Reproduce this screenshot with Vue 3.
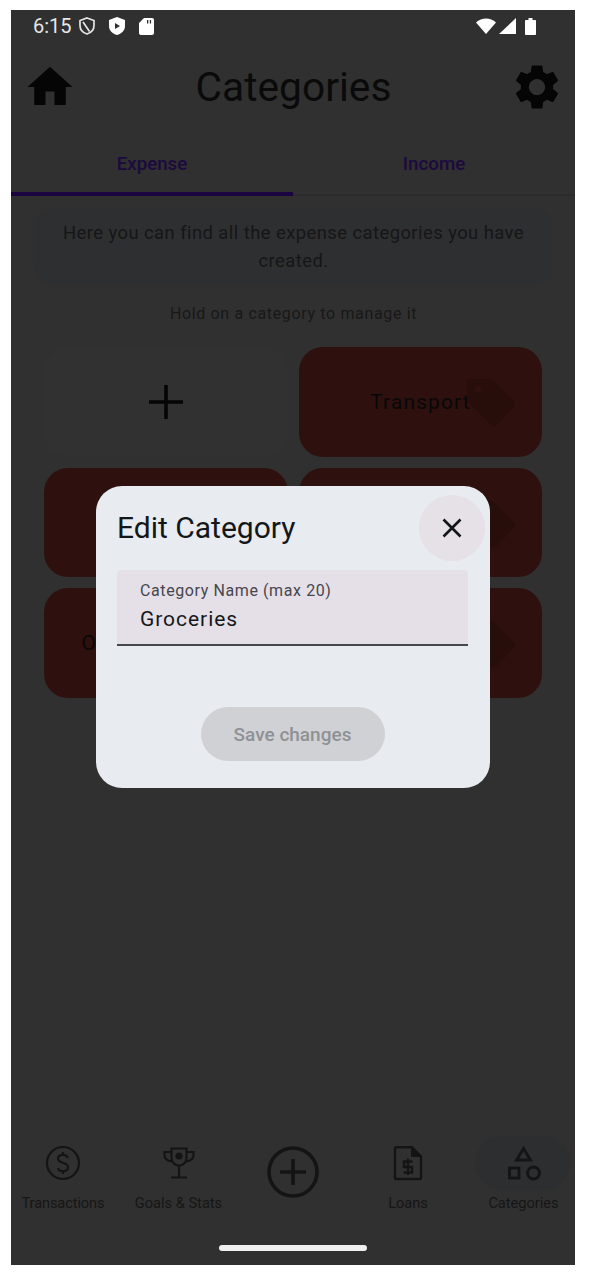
<script setup>
const cards = [
  { id: 1, name: 'Transport' },
  { id: 2, name: '' },
  { id: 3, name: '' },
  { id: 4, name: 'Online Shopping' },
  { id: 5, name: '' }
]
</script>

<template>
  <div class="screen">
    <div class="status">
      <span class="time">6:15</span>
      <svg class="st-shield" viewBox="0 0 16 18" width="16" height="18">
        <path d="M8 1 L15 3.5 V8.5 C15 12.5 12 15.8 8 17 C4 15.8 1 12.5 1 8.5 V3.5 Z M4 5 L10.5 14.5" fill="none" stroke="#e6e6e6" stroke-width="1.7" />
      </svg>
      <svg class="st-play" viewBox="0 0 16 18" width="16" height="18">
        <path fill-rule="evenodd" d="M8 0 L16 3 V9 C16 13.5 12.5 16.8 8 18 C3.5 16.8 0 13.5 0 9 V3 Z M6 6 V12 L11 9 Z" fill="#fff" />
      </svg>
      <svg class="st-sd" viewBox="0 0 15 17" width="15" height="17">
        <path fill-rule="evenodd" d="M5 0 H13 C14.2 0 15 .8 15 2 V15 C15 16.2 14.2 17 13 17 H2 C.8 17 0 16.2 0 15 V5 Z M8 2 V5.5 H9.3 V2 Z M10.8 2 V5.5 H12.1 V2 Z" fill="#fff" />
      </svg>
      <span class="st-space"></span>
      <svg viewBox="0 0 20 16" width="20" height="16">
        <path d="M0 4.5 C5.5 -.8 14.5 -.8 20 4.5 L10 16 Z" fill="#fff" />
      </svg>
      <svg class="st-signal" viewBox="0 0 17 16" width="17" height="16">
        <path d="M17 0 V16 H0 Z" fill="#fff" />
      </svg>
      <svg class="st-batt" viewBox="0 0 11 17" width="11" height="17">
        <path d="M3.5 0 H7.5 V2 H10 C10.6 2 11 2.4 11 3 V16 C11 16.6 10.6 17 10 17 H1 C.4 17 0 16.6 0 16 V3 C0 2.4 .4 2 1 2 H3.5 Z" fill="#fff" />
      </svg>
    </div>

    <header class="top">
      <svg viewBox="0 0 24 24" width="54" height="54">
        <path d="M10 20 V14 H14 V20 H19 V12 H22 L12 3 L2 12 H5 V20 Z" fill="#050505" />
      </svg>
      <h1>Categories</h1>
      <svg viewBox="0 0 24 24" width="54" height="54">
        <path d="M19.14 12.94c.04-.3.06-.61.06-.94 0-.32-.02-.64-.07-.94l2.03-1.58c.18-.14.23-.41.12-.61l-1.92-3.32c-.12-.22-.37-.29-.59-.22l-2.39.96c-.5-.38-1.03-.7-1.62-.94l-.36-2.54c-.04-.24-.24-.41-.48-.41h-3.84c-.24 0-.43.17-.47.41l-.36 2.54c-.59.24-1.13.57-1.62.94l-2.39-.96c-.22-.08-.47 0-.59.22L2.74 8.87c-.12.21-.08.47.12.61l2.03 1.58c-.05.3-.09.63-.09.94s.02.64.07.94l-2.03 1.58c-.18.14-.23.41-.12.61l1.92 3.32c.12.22.37.29.59.22l2.39-.96c.5.38 1.03.7 1.62.94l.36 2.54c.05.24.24.41.48.41h3.84c.24 0 .44-.17.47-.41l.36-2.54c.59-.24 1.13-.56 1.62-.94l2.39.96c.22.08.47 0 .59-.22l1.92-3.32c.12-.22.07-.47-.12-.61l-2.01-1.58zM12 15.6c-1.98 0-3.6-1.62-3.6-3.6s1.62-3.6 3.6-3.6 3.6 1.62 3.6 3.6-1.62 3.6-3.6 3.6z" fill="#050505" />
      </svg>
    </header>

    <nav class="tabs">
      <div class="tab active">Expense</div>
      <div class="tab">Income</div>
    </nav>

    <main class="content">
      <div class="info">Here you can find all the expense categories you have created.</div>
      <p class="hint">Hold on a category to manage it</p>
      <div class="grid">
        <div class="card add">
          <svg viewBox="0 0 34 34" width="34" height="34">
            <path d="M15.2 0 H18.8 V15.2 H34 V18.8 H18.8 V34 H15.2 V18.8 H0 V15.2 H15.2 Z" fill="#050505" />
          </svg>
        </div>
        <div v-for="c in cards" :key="c.id" class="card">
          <span v-if="c.name" class="card-name">{{ c.name }}</span>
          <svg class="tag" viewBox="0 0 48 48" width="48" height="48">
            <path d="M3 0 H22 C23.5 0 24.8 .6 25.8 1.6 L46.5 22 C48.5 24 48.5 26 46.5 28 L30 45.5 C28 47.8 26 47.8 24 45.8 L1.5 23.5 C.5 22.5 0 21.2 0 20 V3 C0 1.2 1.2 0 3 0 Z M11 6.5 A3.5 3.5 0 1 0 11 13.5 A3.5 3.5 0 1 0 11 6.5 Z" fill="#270e0b" fill-rule="evenodd" />
          </svg>
        </div>
      </div>
    </main>

    <footer class="bottom">
      <div class="nav-item">
        <svg viewBox="0 0 36 36" width="36" height="36" fill="none" stroke="#141414" stroke-width="2.2">
          <circle cx="18" cy="18" r="16" />
          <path d="M23 13 C22.3 10.8 20.3 9.8 18 9.8 C15 9.8 13 11.4 13 13.8 C13 19 23 16.6 23 22.2 C23 24.8 21 26.2 18 26.2 C15.4 26.2 13.5 25 13 23 M18 7 V9.8 M18 26.2 V29" />
        </svg>
        <span class="tight">Transactions</span>
      </div>
      <div class="nav-item">
        <svg viewBox="0 0 36 36" width="36" height="36" fill="none" stroke="#141414" stroke-width="2.2">
          <path d="M10.5 3.5 H25.5 V13 C25.5 17 22.5 20.5 18 20.5 C13.5 20.5 10.5 17 10.5 13 Z M10.5 7 H3.5 V10 C3.5 13.5 6.5 16 11 16.5 M25.5 7 H32.5 V10 C32.5 13.5 29.5 16 25 16.5 M18 20.5 V32 M10 32.5 H26" />
          <circle cx="18" cy="11" r="3.6" fill="#141414" stroke="none" />
        </svg>
        <span>Goals &amp; Stats</span>
      </div>
      <div class="nav-item plus">
        <svg viewBox="0 0 52 52" width="52" height="52" fill="none" stroke="#141414" stroke-width="3.6">
          <circle cx="26" cy="26" r="24" />
          <path d="M26 13 V39 M13 26 H39" />
        </svg>
      </div>
      <div class="nav-item">
        <svg viewBox="0 0 36 36" width="36" height="36" fill="none" stroke="#141414" stroke-width="2.4">
          <path d="M6 2.2 H22 L31 11.5 V32.5 C31 33.4 30.4 34 29.5 34 H6.5 C5.6 34 5 33.4 5 32.5 V3.2 C5 2.6 5.4 2.2 6 2.2 Z" />
          <path d="M21 1.5 L32 12 H21 Z" fill="#141414" stroke="none" />
          <path d="M22.5 16.5 H14 V22 H22 V27.5 H13.5 M18 13.5 V30" />
        </svg>
        <span>Loans</span>
      </div>
      <div class="nav-item current">
        <svg viewBox="0 0 36 36" width="36" height="36" fill="none" stroke="#141414" stroke-width="2.8">
          <path d="M17.5 3.5 L24.5 15 H10.5 Z" />
          <rect x="3.5" y="23" width="9.5" height="10" />
          <circle cx="27.5" cy="28" r="6" />
        </svg>
        <span>Categories</span>
      </div>
    </footer>
    <div class="home-bar"></div>

    <div class="modal">
      <div class="modal-head">
        <h2>Edit Category</h2>
        <button class="close">
          <svg viewBox="0 0 20 20" width="20" height="20">
            <path d="M1.5 1.5 L18.5 18.5 M18.5 1.5 L1.5 18.5" stroke="#14171a" stroke-width="2.7" fill="none" />
          </svg>
        </button>
      </div>
      <div class="field">
        <label>Category Name (max 20)</label>
        <div class="value">Groceries</div>
      </div>
      <button class="save">Save changes</button>
    </div>
  </div>
</template>

<style>
html,
body {
  background: #fff;
}
</style>

<style scoped>
.screen {
  position: relative;
  display: flex;
  flex-direction: column;
  width: 564px;
  height: 1255px;
  margin: 10px 0 0 11px;
  background: #303030;
  font-family: Roboto, "Liberation Sans", sans-serif;
  overflow: hidden;
}

.status {
  display: flex;
  align-items: center;
  height: 32px;
  padding: 0 39px 0 22px;
  color: #e6e6e6;
}
.time {
  font-size: 20px;
}
.st-shield {
  margin-left: 7px;
}
.st-play {
  margin-left: 14px;
}
.st-sd {
  margin-left: 14px;
}
.st-space {
  flex: 1;
}
.st-signal {
  margin-left: 3px;
}
.st-batt {
  margin-left: 9px;
}

.top {
  display: flex;
  align-items: center;
  justify-content: space-between;
  height: 90px;
  padding: 0 11px 0 12px;
}
.top h1 {
  margin: 0;
  font-size: 40.7px;
  font-weight: 400;
  color: #0a0a0a;
}

.tabs {
  display: flex;
  box-sizing: border-box;
  height: 64px;
  border-bottom: 2px solid #2b2b2b;
}
.tab {
  flex: 1;
  display: flex;
  align-items: center;
  justify-content: center;
  padding-top: 3px;
  border-bottom: 4px solid transparent;
  font-size: 18.7px;
  font-weight: 500;
  color: #1c0a3e;
  margin-bottom: -2px;
}
.tab.active {
  border-bottom-color: #1a0540;
}

.content {
  flex: 1;
  padding: 12px 22px 0 23px;
}
.info {
  height: 77px;
  padding: 11px 24px 0;
  box-sizing: border-box;
  border-radius: 20px;
  background: #2e2f31;
  color: #161616;
  font-size: 18.4px;
  line-height: 28px;
  text-align: center;
  letter-spacing: 0.45px;
}
.hint {
  margin: 19px 0 0;
  height: 20px;
  color: #181818;
  font-size: 16px;
  line-height: 20px;
  text-align: center;
  letter-spacing: 0.65px;
}
.grid {
  display: grid;
  grid-template-columns: 244px 243px;
  grid-auto-rows: 109.5px;
  gap: 11px;
  margin: 23px 0 0 10px;
}
.card {
  position: relative;
  display: flex;
  align-items: center;
  justify-content: center;
  border-radius: 24px;
  background: #2e110e;
}
.card.add {
  background: #313131;
}
.card-name {
  color: #080808;
  font-size: 21px;
  letter-spacing: 1.1px;
}
.tag {
  position: absolute;
  right: 27px;
  top: 32px;
}

.bottom {
  display: grid;
  grid-template-columns: 104px 127px 102px 128px 103px;
  height: 70px;
  margin: 0 0 50px;
}
.nav-item {
  position: relative;
  display: flex;
  flex-direction: column;
  align-items: center;
  font-size: 14.6px;
  color: #161616;
  white-space: nowrap;
}
.nav-item span {
  position: relative;
  margin-top: 14px;
  line-height: 16px;
}
.nav-item span.tight {
  letter-spacing: -0.1px;
}
.nav-item.plus svg {
  margin-top: 1px;
}
.nav-item.current::before {
  content: "";
  position: absolute;
  left: 3px;
  right: 5px;
  top: -9px;
  height: 54px;
  border-radius: 27px;
  background: #2d2e2f;
}
.nav-item.current svg {
  position: relative;
}

.home-bar {
  position: absolute;
  left: 208px;
  bottom: 14px;
  width: 148px;
  height: 6px;
  border-radius: 3px;
  background: #f0f0f0;
}

.modal {
  position: absolute;
  left: 85px;
  top: 476px;
  width: 394px;
  height: 302px;
  box-sizing: border-box;
  padding: 9px 22px 0 21px;
  border-radius: 26px;
  background: #e8ebf0;
  display: flex;
  flex-direction: column;
}
.modal-head {
  display: flex;
  align-items: center;
  justify-content: space-between;
  height: 66px;
}
.modal-head h2 {
  margin: 0 0 2px;
  font-size: 30px;
  font-weight: 400;
  color: #14171a;
}
.close {
  display: flex;
  align-items: center;
  justify-content: center;
  width: 66px;
  height: 66px;
  margin-right: -17px;
  padding: 0;
  border: 0;
  border-radius: 50%;
  background: #e6e0e7;
}
.field {
  height: 76px;
  box-sizing: border-box;
  margin-top: 9px;
  padding: 11px 22px 0 23px;
  border-radius: 4px 4px 0 0;
  border-bottom: 2px solid #46464e;
  background: #e5e0e7;
}
.field label {
  display: block;
  font-size: 16px;
  line-height: 20px;
  color: #46464e;
  letter-spacing: 0.6px;
}
.value {
  margin-top: 4px;
  font-size: 21px;
  line-height: 28px;
  color: #14171a;
  letter-spacing: 0.95px;
}
.save {
  align-self: center;
  width: 184px;
  height: 54px;
  margin-top: 61px;
  border: 0;
  border-radius: 27px;
  background: #cfd1d5;
  color: #8f9194;
  font-family: inherit;
  font-size: 19px;
  font-weight: 500;
}
</style>
